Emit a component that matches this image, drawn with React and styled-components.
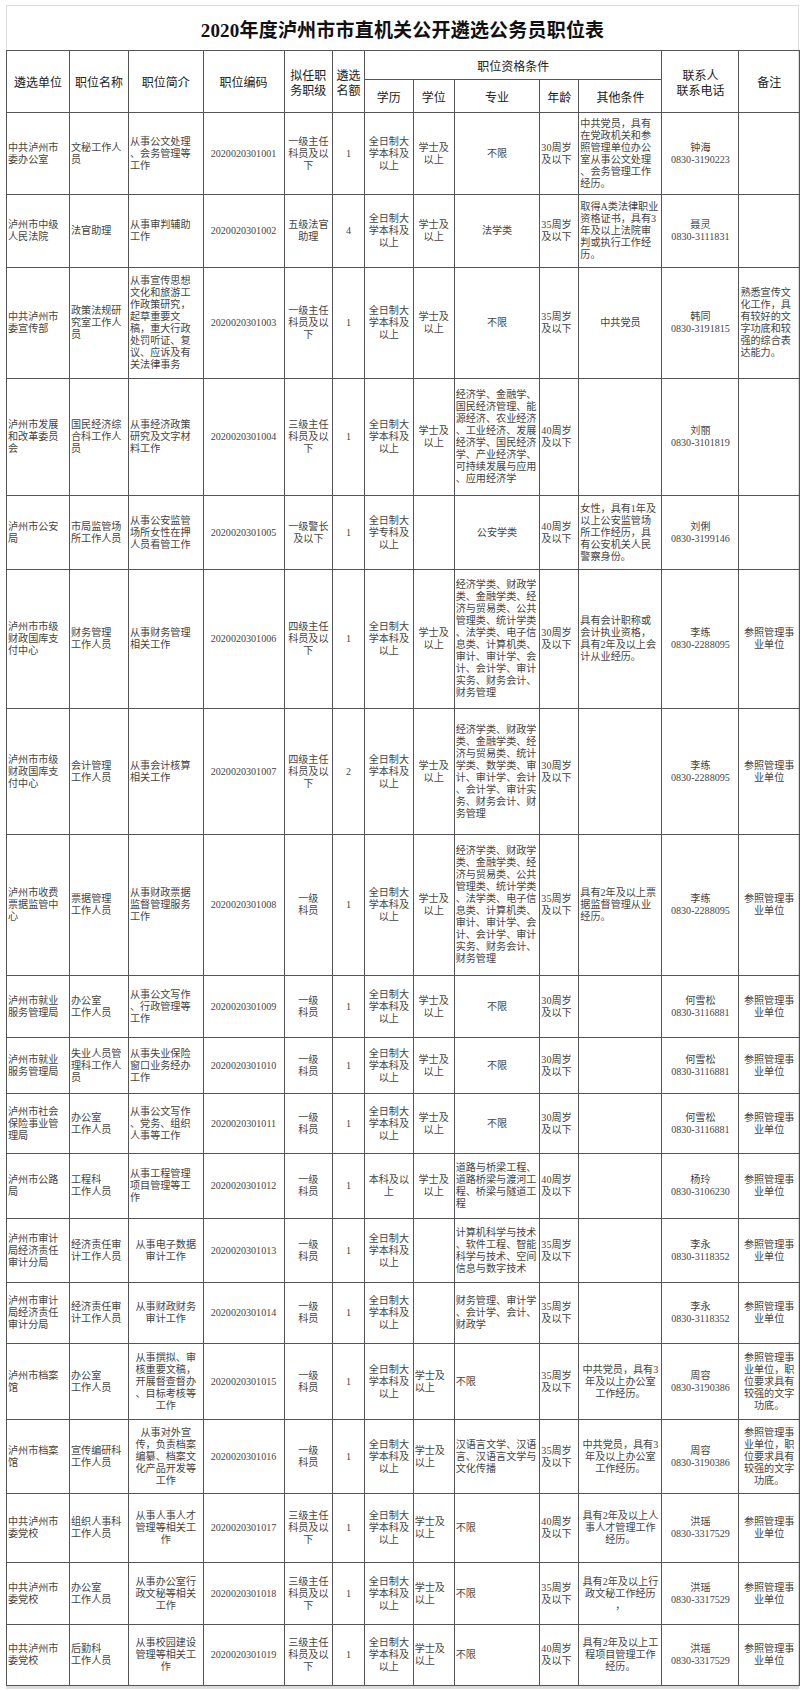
import styled, { createGlobalStyle } from 'styled-components'

const GlobalStyle = createGlobalStyle`
  html, body {
    margin: 0;
    padding: 0;
    background: #fff;
  }
  body {
    width: 800px;
    height: 1690px;
    overflow: hidden;
  }
`

// 各列宽度（像素）
const COLS = [63, 59, 74.5, 81, 48.7, 31.8, 48.7, 41, 85.7, 39, 83, 77, 60.5]
// 各列默认对齐
const ALIGN = ['left', 'left', 'left', 'center', 'center', 'center', 'center', 'center', 'center', 'left', 'left', 'center', 'center']

const EDU = '全日制大\n学本科及\n以上'
const DEG = '学士及\n以上'
const REF = '参照管理事\n业单位'
const KE = '一级\n科员'
const ZR1 = '一级主任\n科员及以\n下'
const ZR3 = '三级主任\n科员及以\n下'
const ZR4 = '四级主任\n科员及以\n下'
const FIN = '经济学类、财政学\n类、金融学类、经\n济与贸易类、公共\n管理类、统计学类\n、法学类、电子信\n息类、计算机类、\n审计、审计学、会\n计、会计学、审计\n实务、财务会计、\n财务管理'

const ROWS = [
  { h: 82, c: ['中共泸州市\n委办公室', '文秘工作人\n员', '从事公文处理\n、会务管理等\n工作', '2020020301001', ZR1, '1', EDU, DEG, '不限', '30周岁\n及以下', '中共党员，具有\n在党政机关和参\n照管理单位办公\n室从事公文处理\n、会务管理工作\n经历。', '钟海\n0830-3190223', ''] },
  { h: 73, c: ['泸州市中级\n人民法院', '法官助理', '从事审判辅助\n工作', '2020020301002', '五级法官\n助理', '4', EDU, DEG, '法学类', '35周岁\n及以下', '取得A类法律职业\n资格证书，具有3\n年及以上法院审\n判或执行工作经\n历。', '聂灵\n0830-3111831', ''] },
  { h: 111, a: { 10: 'center', 12: 'left' }, c: ['中共泸州市\n委宣传部', '政策法规研\n究室工作人\n员', '从事宣传思想\n文化和旅游工\n作政策研究，\n起草重要文\n稿，重大行政\n处罚听证、复\n议、应诉及有\n关法律事务', '2020020301003', ZR1, '1', EDU, DEG, '不限', '35周岁\n及以下', '中共党员', '韩同\n0830-3191815', '熟悉宣传文\n化工作，具\n有较好的文\n字功底和较\n强的综合表\n达能力。'] },
  { h: 117, a: { 8: 'left' }, c: ['泸州市发展\n和改革委员\n会', '国民经济综\n合科工作人\n员', '从事经济政策\n研究及文字材\n料工作', '2020020301004', ZR3, '1', EDU, DEG, '经济学、金融学、\n国民经济管理、能\n源经济、农业经济\n、工业经济、发展\n经济学、国民经济\n学、产业经济学、\n可持续发展与应用\n、应用经济学', '40周岁\n及以下', '', '刘丽\n0830-3101819', ''] },
  { h: 74, c: ['泸州市公安\n局', '市局监管场\n所工作人员', '从事公安监管\n场所女性在押\n人员看管工作', '2020020301005', '一级警长\n及以下', '1', '全日制大\n学专科及\n以上', '', '公安学类', '40周岁\n及以下', '女性，具有1年及\n以上公安监管场\n所工作经历，具\n有公安机关人民\n警察身份。', '刘俐\n0830-3199146', ''] },
  { h: 139, a: { 8: 'left' }, c: ['泸州市市级\n财政国库支\n付中心', '财务管理\n工作人员', '从事财务管理\n相关工作', '2020020301006', ZR4, '1', EDU, DEG, FIN, '30周岁\n及以下', '具有会计职称或\n会计执业资格，\n具有2年及以上会\n计从业经历。', '李练\n0830-2288095', REF] },
  { h: 126, a: { 8: 'left' }, c: ['泸州市市级\n财政国库支\n付中心', '会计管理\n工作人员', '从事会计核算\n相关工作', '2020020301007', ZR4, '2', EDU, DEG, '经济学类、财政学\n类、金融学类、经\n济与贸易类、统计\n学类、数学类、审\n计、审计学、会计\n、会计学、审计实\n务、财务会计、财\n务管理', '30周岁\n及以下', '', '李练\n0830-2288095', REF] },
  { h: 141, a: { 8: 'left' }, c: ['泸州市收费\n票据监管中\n心', '票据管理\n工作人员', '从事财政票据\n监督管理服务\n工作', '2020020301008', KE, '1', EDU, DEG, FIN, '35周岁\n及以下', '具有2年及以上票\n据监督管理从业\n经历。', '李练\n0830-2288095', REF] },
  { h: 62, c: ['泸州市就业\n服务管理局', '办公室\n工作人员', '从事公文写作\n、行政管理等\n工作', '2020020301009', KE, '1', EDU, DEG, '不限', '30周岁\n及以下', '', '何雪松\n0830-3116881', REF] },
  { h: 56, c: ['泸州市就业\n服务管理局', '失业人员管\n理科工作人\n员', '从事失业保险\n窗口业务经办\n工作', '2020020301010', KE, '1', EDU, DEG, '不限', '30周岁\n及以下', '', '何雪松\n0830-3116881', REF] },
  { h: 60, c: ['泸州市社会\n保险事业管\n理局', '办公室\n工作人员', '从事公文写作\n、党务、组织\n人事等工作', '2020020301011', KE, '1', EDU, DEG, '不限', '30周岁\n及以下', '', '何雪松\n0830-3116881', REF] },
  { h: 65, a: { 8: 'left' }, c: ['泸州市公路\n局', '工程科\n工作人员', '从事工程管理\n项目管理等工\n作', '2020020301012', KE, '1', '本科及以\n上', DEG, '道路与桥梁工程、\n道路桥梁与渡河工\n程、桥梁与隧道工\n程', '40周岁\n及以下', '', '杨玲\n0830-3106230', REF] },
  { h: 64, a: { 2: 'center', 8: 'left' }, c: ['泸州市审计\n局经济责任\n审计分局', '经济责任审\n计工作人员', '从事电子数据\n审计工作', '2020020301013', KE, '1', EDU, '', '计算机科学与技术\n、软件工程、智能\n科学与技术、空间\n信息与数字技术', '35周岁\n及以下', '', '李永\n0830-3118352', REF] },
  { h: 61, a: { 2: 'center', 8: 'left' }, c: ['泸州市审计\n局经济责任\n审计分局', '经济责任审\n计工作人员', '从事财政财务\n审计工作', '2020020301014', KE, '1', EDU, '', '财务管理、审计学\n、会计学、会计、\n财政学', '35周岁\n及以下', '', '李永\n0830-3118352', REF] },
  { h: 76, a: { 2: 'center', 7: 'left', 8: 'left', 10: 'center' }, c: ['泸州市档案\n馆', '办公室\n工作人员', '从事撰拟、审\n核重要文稿，\n开展督查督办\n、目标考核等\n工作', '2020020301015', KE, '1', EDU, DEG, '不限', '35周岁\n及以下', '中共党员，具有3\n年及以上办公室\n工作经历。', '周容\n0830-3190386', '参照管理事\n业单位，职\n位要求具有\n较强的文字\n功底。'] },
  { h: 74, a: { 2: 'center', 7: 'left', 8: 'left', 10: 'center' }, c: ['泸州市档案\n馆', '宣传编研科\n工作人员', '从事对外宣\n传，负责档案\n编纂、档案文\n化产品开发等\n工作', '2020020301016', KE, '1', EDU, DEG, '汉语言文学、汉语\n言、汉语言文学与\n文化传播', '35周岁\n及以下', '中共党员，具有3\n年及以上办公室\n工作经历。', '周容\n0830-3190386', '参照管理事\n业单位，职\n位要求具有\n较强的文字\n功底。'] },
  { h: 69, a: { 2: 'center', 7: 'left', 8: 'left', 10: 'center' }, c: ['中共泸州市\n委党校', '组织人事科\n工作人员', '从事人事人才\n管理等相关工\n作', '2020020301017', ZR3, '1', EDU, DEG, '不限', '40周岁\n及以下', '具有2年及以上人\n事人才管理工作\n经历。', '洪瑶\n0830-3317529', REF] },
  { h: 62, a: { 2: 'center', 7: 'left', 8: 'left', 10: 'center' }, c: ['中共泸州市\n委党校', '办公室\n工作人员', '从事办公室行\n政文秘等相关\n工作', '2020020301018', ZR3, '1', EDU, DEG, '不限', '35周岁\n及以下', '具有2年及以上行\n政文秘工作经历\n，', '洪瑶\n0830-3317529', REF] },
  { h: 61, a: { 2: 'center', 7: 'left', 8: 'left', 10: 'center' }, c: ['中共泸州市\n委党校', '后勤科\n工作人员', '从事校园建设\n管理等相关工\n作', '2020020301019', ZR3, '1', EDU, DEG, '不限', '40周岁\n及以下', '具有2年及以上工\n程项目管理工作\n经历。', '洪瑶\n0830-3317529', REF] },
]

const App = () => {
  return (
    <Page>
      <GlobalStyle />
      <Sheet>
        <Title>2020年度泸州市市直机关公开遴选公务员职位表</Title>
        <Table>
          <colgroup>
            {COLS.map((w, i) => (
              <col key={i} style={{ width: w }} />
            ))}
          </colgroup>
          <thead>
            <Tr $h={29}>
              <Th rowSpan={2}>遴选单位</Th>
              <Th rowSpan={2}>职位名称</Th>
              <Th rowSpan={2}>职位简介</Th>
              <Th rowSpan={2}>职位编码</Th>
              <Th rowSpan={2}>{'拟任职\n务职级'}</Th>
              <Th rowSpan={2}>{'遴选\n名额'}</Th>
              <Th colSpan={5}>职位资格条件</Th>
              <Th rowSpan={2}>{'联系人\n联系电话'}</Th>
              <Th rowSpan={2}>备注</Th>
            </Tr>
            <Tr $h={33}>
              <Th>学历</Th>
              <Th>学位</Th>
              <Th>专业</Th>
              <Th>年龄</Th>
              <Th>其他条件</Th>
            </Tr>
          </thead>
          <tbody>
            {ROWS.map((row, r) => (
              <Tr key={r} $h={row.h}>
                {row.c.map((text, i) => (
                  <Td key={i} $align={(row.a && row.a[i]) || ALIGN[i]}>
                    {text}
                  </Td>
                ))}
              </Tr>
            ))}
          </tbody>
        </Table>
      </Sheet>
    </Page>
  )
}

// 页面与表格样式
const Page = styled.div`
  width: 800px;
  height: 1690px;
  padding: 5px 0 0 6px;
  box-sizing: border-box;
  background: #fff;
`

const Sheet = styled.div`
  width: 793px;
  border: 1px solid #dcdcdc;
  border-bottom-width: 3px;
  box-sizing: border-box;
`

const Title = styled.div`
  height: 44px;
  display: flex;
  align-items: center;
  justify-content: center;
  font-family: 'Liberation Serif', 'Noto Sans CJK SC', serif;
  font-weight: 700;
  font-size: 19px;
  color: #111;
  letter-spacing: 0.2px;
`

const Table = styled.table`
  width: 793px;
  margin-left: -1px;
  table-layout: fixed;
  border-collapse: collapse;
`

const Tr = styled.tr`
  height: ${(p) => p.$h}px;
`

const Th = styled.th`
  border: 1px solid #555;
  padding: 0 2px;
  font-family: 'Noto Sans CJK SC', sans-serif;
  font-weight: 400;
  font-size: 12px;
  line-height: 15px;
  color: #222;
  white-space: pre;
  text-align: center;
  vertical-align: middle;
`

const Td = styled.td`
  border: 1px solid #555;
  padding: 0 1px;
  font-family: 'Liberation Serif', 'Noto Sans CJK SC', serif;
  font-size: 10.1px;
  line-height: 12px;
  color: #444;
  white-space: pre;
  text-align: ${(p) => p.$align};
  vertical-align: middle;
  overflow: hidden;
`

export default App
